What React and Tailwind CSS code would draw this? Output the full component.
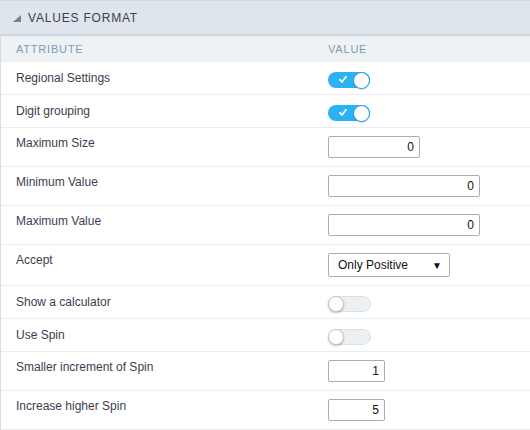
import React from "react";

function Toggle({ on }) {
  if (on) {
    return (
      <div className="relative w-[42px] h-[16px] rounded-full bg-[#2ab3f4]">
        <svg className="absolute left-[11px] top-[4px]" width="8" height="7" viewBox="0 0 8 7">
          <path d="M1 3.8 L3 6 L7 0.8" stroke="#fff" strokeWidth="1.8" fill="none" strokeLinecap="round" strokeLinejoin="round" />
        </svg>
        <div className="absolute right-0 top-[-0.5px] w-[17px] h-[17px] rounded-full bg-white border border-[#1d98da] shadow-[0_1px_1px_rgba(0,0,0,0.15)]" />
      </div>
    );
  }
  return (
    <div className="relative w-[43px] h-[16px] rounded-full bg-[#edf0f3] border border-[#dbe0e6]">
      <div className="absolute left-[-1px] top-[-1px] w-[16px] h-[16px] rounded-full bg-white border border-[#c4c8cd] shadow-[0_1px_2px_rgba(0,0,0,0.25)]" />
    </div>
  );
}

function NumInput({ value, w }) {
  return (
    <div
      className={`${w} h-[22px] border border-[#a7aeba] rounded-[2px] bg-white flex items-center justify-end pr-[5px] text-[12px] text-[#111]`}
    >
      {value}
    </div>
  );
}

function Row({ label, children, kind }) {
  const h = kind === "toggle" ? "h-[33px]" : kind === "select" ? "h-[41px]" : "h-[39px]";
  const lp = kind === "toggle" ? "pt-[8px]" : "pt-[7px]";
  const cp = kind === "toggle" ? "pt-[10px]" : "pt-[8px]";
  return (
    <div className={`grid grid-cols-[327px_1fr] ${h} border-b border-[#e9edf1]`}>
      <div className={`pl-[15px] ${lp} text-[12px] leading-[17px] text-[#3d3d4f]`}>{label}</div>
      <div className={cp}>{children}</div>
    </div>
  );
}

export default function App() {
  return (
    <div className="w-[530px] h-[430px] overflow-hidden bg-white font-['Liberation_Sans',Arial,sans-serif]">
      <div className="h-[36px] bg-[#dfe5ec] border-t border-[#cfd8e0] border-b-2 border-b-[#cdd6de] flex items-center">
        <svg className="ml-[13px] mt-[2px]" width="8" height="7" viewBox="0 0 8 7">
          <polygon points="0,7 8,0 8,7" fill="#7a7f88" />
        </svg>
        <span className="ml-[7px] text-[12px] tracking-[0.8px] text-[#3e3e52]">VALUES FORMAT</span>
      </div>
      <div className="border-l border-[#d3dce4]">
        <div className="grid grid-cols-[327px_1fr] h-[26px] bg-[#eef2f5] items-center text-[11px] tracking-[0.8px] text-[#7b9db2]">
          <div className="pl-[15px]">ATTRIBUTE</div>
          <div>VALUE</div>
        </div>
        <Row label="Regional Settings" kind="toggle"><Toggle on /></Row>
        <Row label="Digit grouping" kind="toggle"><Toggle on /></Row>
        <Row label="Maximum Size" kind="input"><NumInput value="0" w="w-[92px]" /></Row>
        <Row label="Minimum Value" kind="input"><NumInput value="0" w="w-[152px]" /></Row>
        <Row label="Maximum Value" kind="input"><NumInput value="0" w="w-[152px]" /></Row>
        <Row label="Accept" kind="select">
          <div className="w-[122px] h-[24px] border border-[#a7aeba] rounded-[2px] bg-white flex items-center justify-between pl-[9px] pr-[7px] text-[12px] text-[#111]">
            <span>Only Positive</span>
            <span className="text-[10px] text-[#111]">▼</span>
          </div>
        </Row>
        <Row label="Show a calculator" kind="toggle"><Toggle /></Row>
        <Row label="Use Spin" kind="toggle"><Toggle /></Row>
        <Row label="Smaller increment of Spin" kind="input"><NumInput value="1" w="w-[57px]" /></Row>
        <Row label="Increase higher Spin" kind="input"><NumInput value="5" w="w-[57px]" /></Row>
      </div>
    </div>
  );
}
